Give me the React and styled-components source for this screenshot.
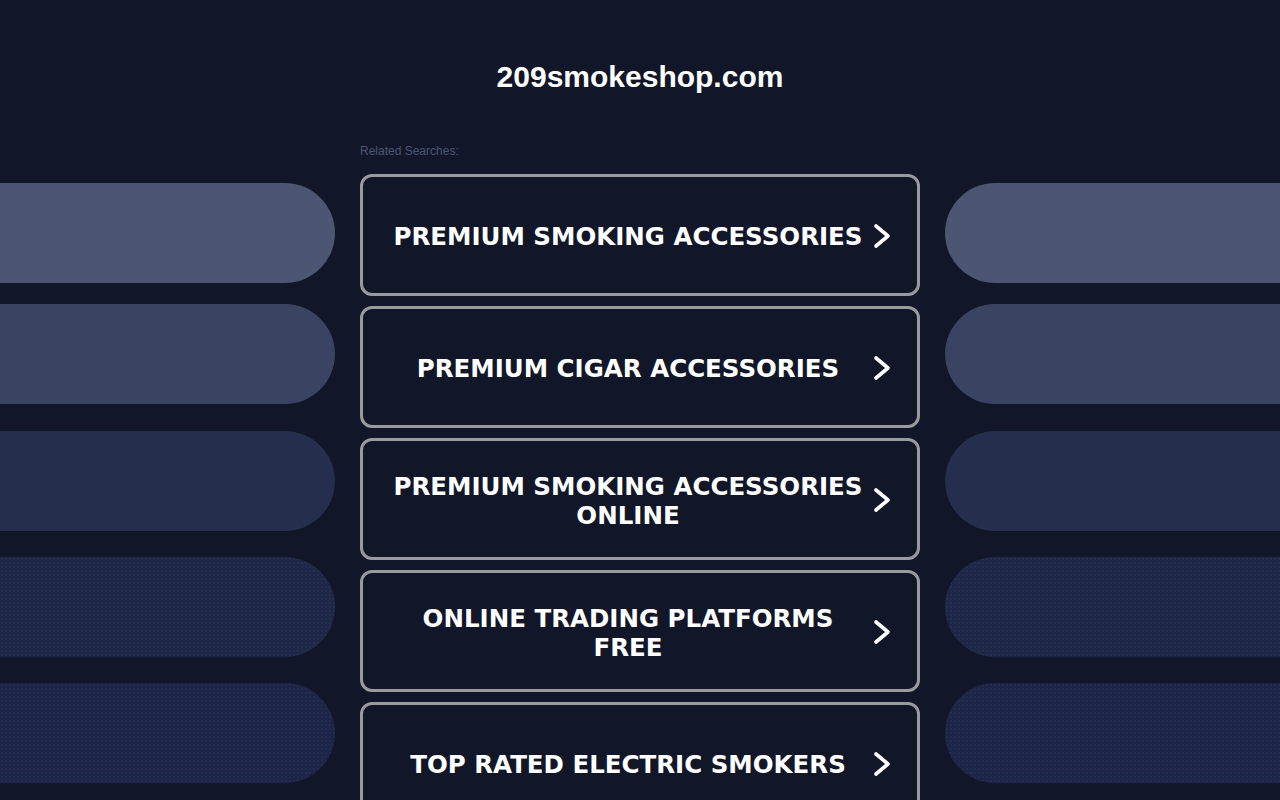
import React from 'react';
import styled, { createGlobalStyle, css } from 'styled-components';

const GlobalStyle = createGlobalStyle`
    html, body {
        margin: 0;
        padding: 0;
        background-color: #111729;
        overflow: hidden;
    }
    * {
        box-sizing: border-box;
    }
`;

const Page = styled.div`
    width: 1280px;
    height: 800px;
    background-color: #111729;
    font-family: "Liberation Sans", Arial, sans-serif;
`;

const Header = styled.h1`
    margin: 0;
    padding-top: 60px;
    text-align: center;
    font-size: 30px;
    line-height: 34px;
    font-weight: 700;
    color: #fff;
`;

const Main = styled.div`
    display: grid;
    grid-template-columns: 335px 560px 335px;
    column-gap: 25px;
    margin-top: 46px;
`;

const PillColumn = styled.div`
    display: flex;
    flex-direction: column;
    padding-top: 43px;
`;

const dots = css`
    background-image: radial-gradient(rgba(255, 255, 255, 0.045) 0.6px, transparent 1px);
    background-size: 4px 4px;
`;

const Pill = styled.div`
    height: 100px;
    margin-top: ${p => p.offset}px;
    background-color: ${p => p.color};
    border-radius: ${p => (p.side === 'left' ? '0 50px 50px 0' : '50px 0 0 50px')};
    ${p => p.textured && dots}
`;

const Center = styled.div`
    display: flex;
    flex-direction: column;
`;

const Label = styled.div`
    font-size: 12px;
    line-height: 20px;
    padding-top: 1px;
    color: #4b5676;
    margin-bottom: 13px;
`;

const LinkList = styled.div`
    display: flex;
    flex-direction: column;
    gap: 10px;
`;

const LinkBox = styled.a`
    display: flex;
    align-items: center;
    height: 122px;
    padding: 3px 25px 0 27px;
    border: 3px solid #999a9e;
    border-radius: 12px;
    background-color: #111729;
    text-decoration: none;
    cursor: pointer;

    span {
        flex: 1;
        margin-right: 6px;
        text-align: center;
        font-family: "DejaVu Sans", Verdana, sans-serif;
        font-weight: 700;
        font-size: 24.5px;
        line-height: 29px;
        color: #fff;
    }

    svg {
        flex-shrink: 0;
        margin-top: -2px;
    }
`;

const pills = [
    { color: '#4c5673', offset: 0 },
    { color: '#3a4462', offset: 21 },
    { color: '#252e4d', offset: 27 },
    { color: '#1e2747', offset: 26, textured: true },
    { color: '#1c2548', offset: 26, textured: true },
];

const links = [
    'PREMIUM SMOKING ACCESSORIES',
    'PREMIUM CIGAR ACCESSORIES',
    'PREMIUM SMOKING ACCESSORIES ONLINE',
    'ONLINE TRADING PLATFORMS FREE',
    'TOP RATED ELECTRIC SMOKERS',
];

function Chevron() {
    return (
        <svg width="20" height="26" viewBox="0 0 20 26" fill="none">
            <polyline
                points="4,3 16,13 4,23"
                stroke="#fff"
                strokeWidth="3.6"
                strokeLinecap="round"
                strokeLinejoin="round"
            />
        </svg>
    );
}

function App() {
    return (
        <Page>
            <GlobalStyle />
            <Header>209smokeshop.com</Header>
            <Main>
                <PillColumn>
                    {pills.map((p, i) => (
                        <Pill key={i} side="left" color={p.color} offset={p.offset} textured={p.textured} />
                    ))}
                </PillColumn>
                <Center>
                    <Label>Related Searches:</Label>
                    <LinkList>
                        {links.map(text => (
                            <LinkBox key={text}>
                                <span>{text}</span>
                                <Chevron />
                            </LinkBox>
                        ))}
                    </LinkList>
                </Center>
                <PillColumn>
                    {pills.map((p, i) => (
                        <Pill key={i} side="right" color={p.color} offset={p.offset} textured={p.textured} />
                    ))}
                </PillColumn>
            </Main>
        </Page>
    );
}

export default App;
